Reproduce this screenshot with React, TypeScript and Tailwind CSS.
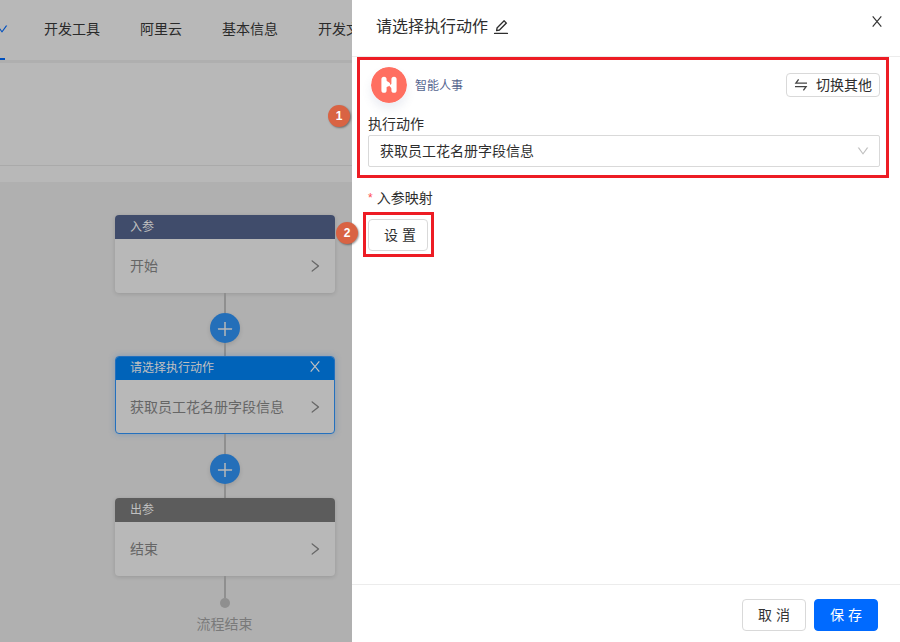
import type { ReactNode } from "react";
import { clsx } from "clsx";
import { AiOutlineDown, AiOutlineEdit, AiOutlinePlus, AiOutlineRight } from "react-icons/ai";

interface FlowCardProps {
  title: string;
  text: string;
  headerClass: string;
  active?: boolean;
}

const NAV_ITEMS = ["开发工具", "阿里云", "基本信息", "开发文"];

function CloseIcon({ className }: { className?: string }) {
  return (
    <svg width="10" height="11" viewBox="0 0 10 11" fill="none" stroke="currentColor" strokeWidth="1.2" className={className}>
      <path d="M.7.4 9.3 10.6M9.3.4.7 10.6" />
    </svg>
  );
}

function FlowCard({ title, text, headerClass, active }: FlowCardProps) {
  return (
    <div
      className={clsx(
        "h-[78px] w-[220px] shrink-0 overflow-hidden rounded bg-[#b8b8b8]",
        active
          ? "border border-[#2470bd] shadow-[0_0_6px_rgba(36,112,189,0.35)]"
          : "shadow-[0_1px_4px_rgba(0,0,0,0.14)]"
      )}
    >
      <div
        className={clsx(
          "flex items-center justify-between text-xs text-[#c0c0c0]",
          active ? "h-[23px] pr-3.5 pb-0.5 pl-3.5" : "h-6 px-[15px]",
          headerClass
        )}
      >
        <span>{title}</span>
        {active && <CloseIcon className="-mt-0.5" />}
      </div>
      <div
        className={clsx(
          "flex h-[54px] items-center justify-between text-sm text-[#666666]",
          active ? "pr-[11px] pl-3.5" : "pr-3 pl-[15px]"
        )}
      >
        <span>{text}</span>
        <AiOutlineRight size={16} className="text-[#686868]" />
      </div>
    </div>
  );
}

function Connector({ tall }: { tall?: boolean }) {
  return (
    <>
      <div className="h-5 w-0.5 bg-[#8f8f8f]" />
      <div className="flex size-[30px] items-center justify-center rounded-full bg-[#246fb9] text-[#b8b8b8] shadow-[0_2px_4px_rgba(0,0,0,0.12)]">
        <AiOutlinePlus size={20} className="mt-px" />
      </div>
      <div className={clsx("w-0.5 bg-[#8f8f8f]", tall ? "h-3.5" : "h-[13px]")} />
    </>
  );
}

function Button({ children, primary }: { children: ReactNode; primary?: boolean }) {
  return (
    <button
      className={clsx(
        "flex h-8 w-16 items-center justify-center rounded border text-sm",
        primary
          ? "border-[#006aff] bg-[#006aff] text-white"
          : "border-[#d9d9d9] bg-white text-[#333333]"
      )}
    >
      {children}
    </button>
  );
}

function StepBadge({ n, className }: { n: number; className: string }) {
  return (
    <div
      className={clsx(
        "absolute flex size-[22px] items-center justify-center rounded-full bg-[#d96343] text-xs font-bold text-white shadow-[1px_1px_2px_rgba(0,0,0,0.4)]",
        className
      )}
    >
      {n}
    </div>
  );
}

function SwapIcon() {
  return (
    <svg width="14" height="14" viewBox="0 0 14 14" fill="none" stroke="#444444" strokeWidth="1.3">
      <path d="M4.6 1.4 1.9 5.1H13" />
      <path d="M1 8.6h11.1L9.4 12.3" />
    </svg>
  );
}

function AppLogo() {
  return (
    <svg width="36" height="36" viewBox="0 0 36 36" className="rounded-full shadow-[0_6px_10px_rgba(90,110,160,0.12)]">
      <circle cx="18" cy="18" r="18" fill="#ff6f61" />
      <path d="M13 12.3v10.9M23 12.3v10.9" stroke="#fff" strokeWidth="5.2" strokeLinecap="round" />
      <path d="M15 13.4 18.2 15.6a2 2 0 0 1 0 3.4L15 20.2z" fill="#fff" />
      <path d="M21 16.8 18 18.6 21 21.8z" fill="#fff" />
    </svg>
  );
}

export default function App() {
  return (
    <div className="relative flex h-[642px] w-[900px] overflow-hidden bg-white font-['Liberation_Sans','Noto_Sans_CJK_SC',sans-serif]">
      {/* Dimmed page */}
      <div className="flex w-[352px] shrink-0 flex-col overflow-hidden bg-[#b8b8b8]">
        <div className="flex h-[60px] shrink-0">
          <div className="flex w-[5px] shrink-0 items-center justify-end border-b-2 border-[#004fbd]">
            <AiOutlineDown size={14} className="-mr-1 shrink-0 text-[#0050bf]" />
          </div>
          <nav className="flex items-center gap-10 pb-0.5 pl-[39px] text-sm whitespace-nowrap text-[#2a2a2a]">
            {NAV_ITEMS.map((item) => (
              <span key={item}>{item}</span>
            ))}
          </nav>
        </div>
        <div className="h-[3px] shrink-0 bg-[#afafaf]" />
        <div className="h-[103px] shrink-0 border-b border-[#aaaaaa]" />
        <div className="h-4 shrink-0" />

        {/* Flow canvas */}
        <div className="flex flex-1 flex-col items-center bg-[#b0b0b0] pt-[33px] pl-[98px]">
          <FlowCard title="入参" text="开始" headerClass="bg-[#404c6b]" />
          <Connector />
          <FlowCard title="请选择执行动作" text="获取员工花名册字段信息" headerClass="bg-[#0063b9]" active />
          <Connector tall />
          <FlowCard title="出参" text="结束" headerClass="bg-[#5c5c5c]" />
          <div className="h-[22px] w-0.5 bg-[#8f8f8f]" />
          <div className="size-2.5 rounded-full bg-[#8f8f8f]" />
          <div className="mt-1.5 mr-px text-sm leading-5 text-[#7a7a7a]">流程结束</div>
        </div>
      </div>

      {/* Drawer */}
      <div className="flex flex-1 flex-col bg-white text-sm text-[#2e2e2e]">
        <div className="flex h-[57px] shrink-0 items-start justify-between border-b border-[#ececec] pr-[18px] pl-6">
          <div className="flex items-center gap-1 pt-[15px] text-base leading-6">
            <span>请选择执行动作</span>
            <AiOutlineEdit size={18} className="-mt-px" />
          </div>
          <CloseIcon className="mt-4 text-[#333333]" />
        </div>

        <div className="flex flex-1 flex-col pr-5 pl-4">
          <div className="mt-2.5 flex h-9 items-center justify-between pl-[3px]">
            <div className="flex items-center gap-2">
              <AppLogo />
              <span className="pt-0.5 text-xs text-[#55658f]">智能人事</span>
            </div>
            <button className="flex h-6 w-[94px] items-center justify-center gap-2 rounded border border-[#d9d9d9]">
              <SwapIcon />
              切换其他
            </button>
          </div>
          <div className="mt-2.5 leading-[22px]">执行动作</div>
          <div className="flex h-8 items-center justify-between rounded-[2px] border border-[#d9d9d9] pr-[9px] pl-[11px]">
            <span>获取员工花名册字段信息</span>
            <AiOutlineDown size={14} className="text-[#bfbfbf]" />
          </div>
          <div className="mt-5 flex items-center gap-1 leading-[22px]">
            <span className="h-4 text-xs leading-4 text-[#ff4d4f]">*</span>
            入参映射
          </div>
          <button className="mt-2.5 flex h-8 w-[60px] items-center justify-center rounded border border-[#d9d9d9] pl-1">
            设 置
          </button>
        </div>

        <div className="flex h-[58px] shrink-0 items-center justify-end gap-2 border-t border-[#ececec] pt-0.5 pr-[22px]">
          <Button>取 消</Button>
          <Button primary>保 存</Button>
        </div>
      </div>

      {/* Callouts */}
      <div className="absolute top-[57px] left-[357px] h-[121px] w-[532px] border-3 border-[#ed1c24]" />
      <div className="absolute top-[212px] left-[363px] h-[45px] w-[71px] border-3 border-[#ed1c24]" />
      <StepBadge n={1} className="top-[105px] left-[328px]" />
      <StepBadge n={2} className="top-[222px] left-[336px]" />
    </div>
  );
}
